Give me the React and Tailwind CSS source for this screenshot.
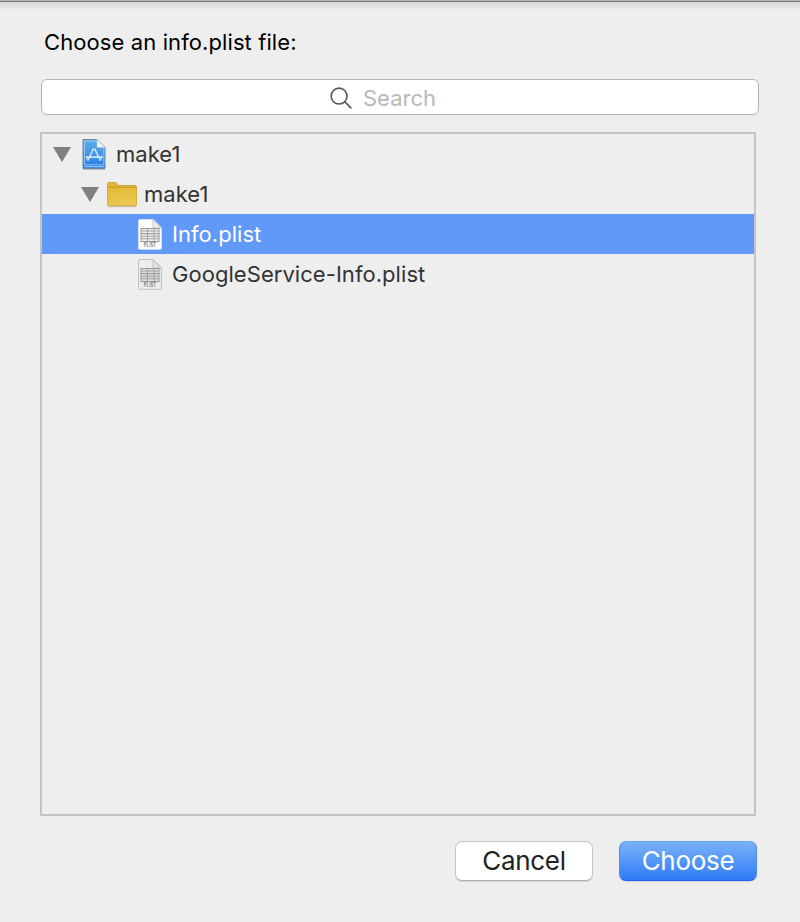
import React from "react";

function Triangle() {
  return (
    <svg width="18" height="15" viewBox="0 0 18 15" className="shrink-0">
      <path d="M0 0H18L9 15Z" fill="#7f7f7f" />
    </svg>
  );
}

function ProjectIcon() {
  return (
    <svg width="24" height="31" viewBox="0 0 24 31" className="shrink-0 overflow-visible">
      <defs>
        <linearGradient id="proj" x1="0" y1="0" x2="0" y2="1">
          <stop offset="0" stopColor="#5cb0e6" />
          <stop offset="1" stopColor="#2878e6" />
        </linearGradient>
      </defs>
      <path d="M1 30.5H23" stroke="#000" strokeOpacity=".2" />
      <path d="M1 .5H15L23 8.5V29.5H1Z" fill="url(#proj)" stroke="#6488ad" />
      <path d="M15 2H2.5V25.8H21.8V9" fill="none" stroke="#a9d2f5" strokeWidth=".8" />
      <path d="M2.5 27.7H22" stroke="#a9d2f5" strokeWidth="1" />
      <path d="M15 .5V8.5H23Z" fill="#f4f4f4" stroke="#bcc6ce" strokeWidth=".6" />
      <path d="M15.6 0H23.6V8Z" fill="#eee" />
      <g fill="none" stroke="#cfe6fc" strokeWidth="1.5" strokeLinecap="round">
        <path d="M11.2 10.2L6 21.3M12.8 10.2L18.3 21.3" />
        <path d="M4.5 18.2H20" strokeWidth="1.7" />
        <path d="M10.3 10.2H13.7M5 17.5V20.5M19.3 17V20" strokeWidth="1.1" />
      </g>
    </svg>
  );
}

function FolderIcon() {
  return (
    <svg width="30" height="25" viewBox="0 0 30 25" className="shrink-0 overflow-visible">
      <defs>
        <linearGradient id="fold" x1="0" y1="0" x2="0.3" y2="1">
          <stop offset="0" stopColor="#e3b934" />
          <stop offset="1" stopColor="#eac851" />
        </linearGradient>
      </defs>
      <path d="M1 24.7H29" stroke="#000" strokeOpacity=".2" />
      <path d="M.5 23V2Q.5 .5 2 .5H8.3Q9.4 .5 10 1.8L11 3.5H28Q29.5 3.5 29.5 5V23Q29.5 23.7 28.7 23.7H1.3Q.5 23.7 .5 23Z" fill="#e3b838" stroke="#c69a25" strokeWidth=".8" />
      <path d="M.7 5.7H29.3V23.3H.7Z" fill="url(#fold)" />
      <path d="M.5 5.3H29.5" stroke="#bd922a" strokeWidth=".8" />
    </svg>
  );
}

function PlistIcon({ dim }) {
  return (
    <svg width="24" height="31" viewBox="0 0 24 31" className="shrink-0 overflow-visible">
      <path d="M2 .5H15.5L23.5 9V29Q23.5 30.3 22.2 30.3H1.8Q.5 30.3 .5 29V2Q.5 .5 2 .5Z" fill={dim ? "#ececec" : "#fff"} stroke={dim ? "#bdbdbd" : "#dbe2ec"} strokeWidth=".9" />
      <path d="M15 .7V9H23.2Z" fill={dim ? "#e4e4e4" : "#eee"} stroke="#bbb" strokeWidth=".8" />
      <rect x="3" y="9.5" width="18" height="13" fill={dim ? "#dedede" : "#f0f0f0"} stroke="#999" strokeWidth="1" />
      <path d="M3 12H21M3 14.6H21M3 17.2H21M3 19.8H21" stroke="#a0a0a0" strokeWidth="1.1" />
      <path d="M9.5 9.5V22.5M16 9.5V22.5" stroke="#999" strokeWidth=".8" />
      <text x="12" y="28.4" textAnchor="middle" textLength="12.5" lengthAdjust="spacingAndGlyphs" fontSize="5.6" fontWeight="600" fill="#777" fontFamily="Inter, sans-serif">PLIST</text>
    </svg>
  );
}

export default function App() {
  return (
    <div className="flex h-[922px] w-[800px] flex-col overflow-hidden bg-[#eeeeee] font-[Inter,sans-serif] text-[22px] leading-[40px] text-[#333]">
      <div className="h-px shrink-0 bg-[#b2b2b2]" />
      <div className="h-px shrink-0 bg-[#7c7c7c]" />
      <div className="h-2 shrink-0 bg-linear-to-b from-[#d5d5d5] to-[#ededed]" />
      <h1 className="ml-[44px] mt-[12px] h-10 shrink-0 font-normal tracking-[0.1px] text-black">
        Choose an info.plist file:
      </h1>
      <div className="ml-[41px] mt-[17px] flex h-9 w-[718px] shrink-0 items-center rounded-[6px] border border-[#b5b5b5] bg-white pl-[288px]">
        <svg width="22" height="22" viewBox="0 0 23 23" className="mt-px shrink-0" fill="none" stroke="#555" strokeWidth="1.7" strokeLinecap="round">
          <circle cx="9.5" cy="9.5" r="8.3" />
          <path d="M15.5 15.5L21.8 21.8" />
        </svg>
        <span className="ml-[11px] mt-px text-[#b9b9b9]">Search</span>
      </div>
      <div className="ml-10 mt-[17px] h-[684px] w-[716px] shrink-0 border-2 border-[#c4c4c4] tracking-[0.05px]">
        <div className="flex h-10 items-center pl-[11px]">
          <Triangle />
          <div className="ml-[11px] flex"><ProjectIcon /></div>
          <span className="ml-[10px]">make1</span>
        </div>
        <div className="flex h-10 items-center pl-[39px]">
          <Triangle />
          <div className="ml-2 flex"><FolderIcon /></div>
          <span className="ml-[7px]">make1</span>
        </div>
        <div className="flex h-10 items-center bg-[#6199f8] pl-24 text-white">
          <PlistIcon />
          <span className="ml-[10px]">Info.plist</span>
        </div>
        <div className="flex h-10 items-center pl-24">
          <PlistIcon dim />
          <span className="ml-[10px]">GoogleService-Info.plist</span>
        </div>
      </div>
      <div className="ml-[455px] mt-[25px] flex shrink-0 gap-[26px] text-[26px] leading-[38px] tracking-[-0.3px]">
        <button className="h-10 w-[138px] rounded-[7px] border border-[#c6c6c6] border-b-[#acacac] bg-white text-[#222] shadow-[0_1px_1px_rgba(0,0,0,0.1)]">Cancel</button>
        <button className="h-10 w-[138px] rounded-[7px] border border-[#4d8ff0] border-t-[#67a4ef] border-b-[#2262ee] bg-linear-to-b from-[#78b1f5] to-[#2f7af8] text-white shadow-[0_1px_1px_rgba(0,0,0,0.12)]">Choose</button>
      </div>
    </div>
  );
}
